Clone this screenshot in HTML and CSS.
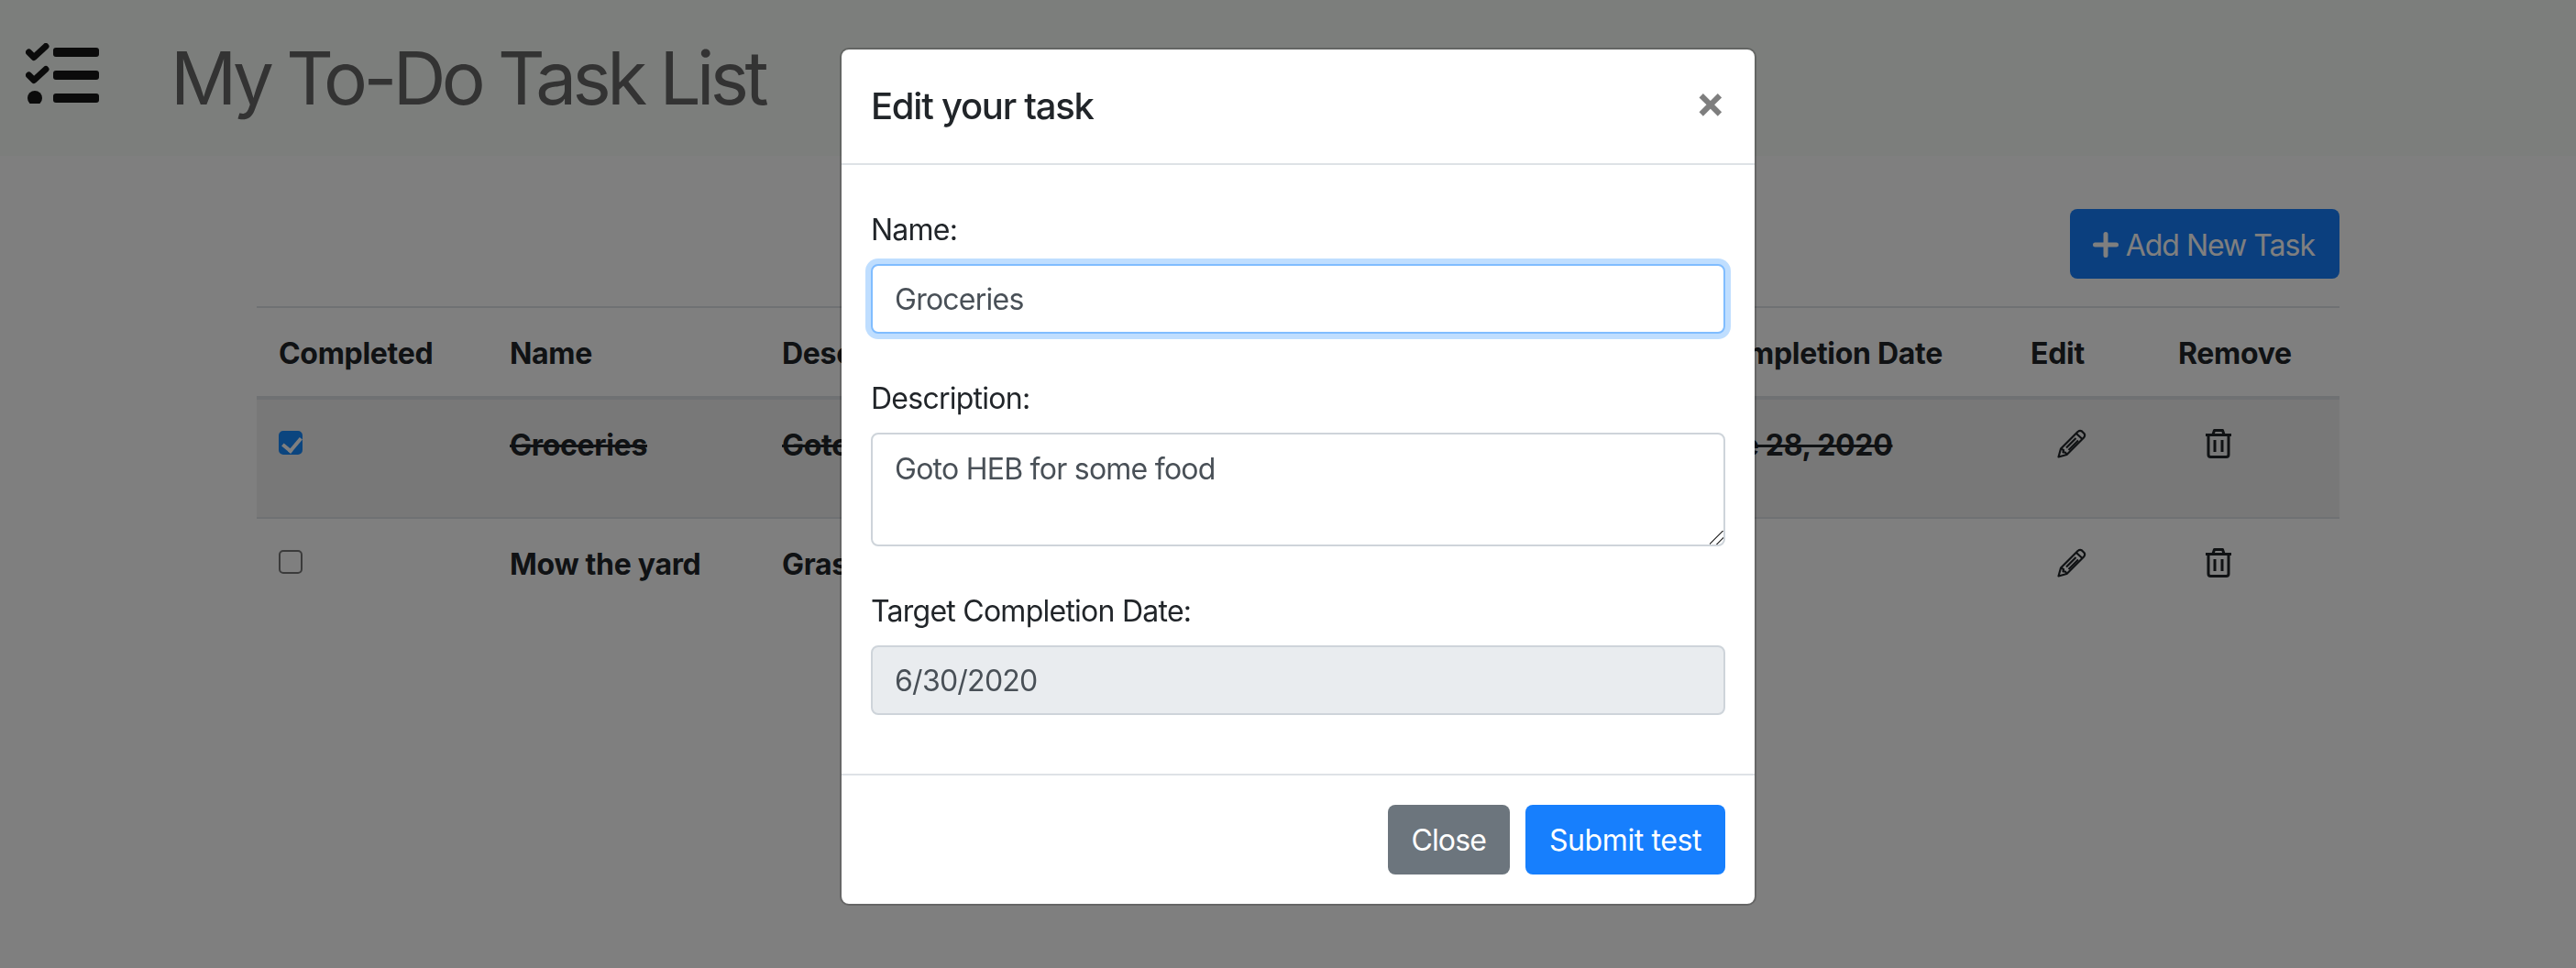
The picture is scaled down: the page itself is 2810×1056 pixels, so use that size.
FILE: index.html
```html
<!DOCTYPE html>
<html lang="en">
<head>
  <meta charset="UTF-8">
  <meta name="viewport" content="width=device-width, initial-scale=1.0">
  <title>My To-Do Task List</title>
  <link rel="stylesheet" href="styles.css">
</head>
<body>
  <header class="app-header">
    <svg class="logo" viewBox="0 0 84 66" width="84" height="66">
      <path class="logo-check" d="M3.5 10 L9 15.5 L22 3.5" />
      <path class="logo-check" d="M3.5 35 L9 40.5 L22 28.5" />
      <circle cx="10" cy="60" r="8" />
      <rect x="30" y="5" width="50" height="10" rx="3" />
      <rect x="30" y="30" width="50" height="10" rx="3" />
      <rect x="30" y="55" width="50" height="10" rx="3" />
    </svg>
    <h1>My To-Do Task List</h1>
  </header>

  <main class="content">
    <div class="toolbar">
      <button class="btn btn-primary btn-add">
        <svg class="plus" viewBox="0 0 28 28" width="28" height="28"><path d="M14 2.5 V25.5 M2.5 14 H25.5" /></svg>
        Add New Task
      </button>
    </div>
    <table class="tasks">
      <colgroup>
        <col class="col-done"><col class="col-name"><col class="col-desc"><col class="col-date"><col class="col-edit"><col class="col-remove">
      </colgroup>
      <thead>
        <tr>
          <th>Completed</th>
          <th>Name</th>
          <th>Description</th>
          <th>Target Completion Date</th>
          <th>Edit</th>
          <th>Remove</th>
        </tr>
      </thead>
      <tbody>
        <tr class="done">
          <td><input type="checkbox" class="check" checked></td>
          <td class="strong">Groceries</td>
          <td class="strong">Goto HEB for some food</td>
          <td class="strong">Mon, June 28, 2020</td>
          <td>
            <svg class="icon-pencil" viewBox="0 0 32 32" width="32" height="32">
              <path d="M1.5 30.5 L4 21.5 L22.5 3 Q25 1 27 2.5 L29.5 5 Q31 7 29 9.5 L10.5 28 Z" />
              <path d="M21 5 L27.5 11 M4 21.5 L7 23 L6.5 25.5 L9 25.5 L10.5 28 M10 20.5 L20.5 10 M12.5 23 L23 12.5" />
            </svg>
          </td>
          <td>
            <svg class="icon-trash" viewBox="0 0 28 32" width="28" height="32">
              <path d="M0 6.5 H28 M8 6 L9.5 1.5 H18.5 L20 6 M3 7 V28 Q3 30.5 5.5 30.5 H22.5 Q25 30.5 25 28 V7 M10 12 V25 M18 12 V25" />
            </svg>
          </td>
        </tr>
        <tr>
          <td><input type="checkbox" class="check"></td>
          <td class="strong">Mow the yard</td>
          <td class="strong">Grass needs cutting</td>
          <td class="strong">7/4/2020</td>
          <td>
            <svg class="icon-pencil" viewBox="0 0 32 32" width="32" height="32">
              <path d="M1.5 30.5 L4 21.5 L22.5 3 Q25 1 27 2.5 L29.5 5 Q31 7 29 9.5 L10.5 28 Z" />
              <path d="M21 5 L27.5 11 M4 21.5 L7 23 L6.5 25.5 L9 25.5 L10.5 28 M10 20.5 L20.5 10 M12.5 23 L23 12.5" />
            </svg>
          </td>
          <td>
            <svg class="icon-trash" viewBox="0 0 28 32" width="28" height="32">
              <path d="M0 6.5 H28 M8 6 L9.5 1.5 H18.5 L20 6 M3 7 V28 Q3 30.5 5.5 30.5 H22.5 Q25 30.5 25 28 V7 M10 12 V25 M18 12 V25" />
            </svg>
          </td>
        </tr>
      </tbody>
    </table>
  </main>

  <div class="backdrop"></div>

  <div class="modal">
    <div class="modal-header">
      <h5>Edit your task</h5>
      <button class="close">&times;</button>
    </div>
    <form class="modal-body">
      <div class="form-group">
        <label for="name">Name:</label>
        <input id="name" class="form-control focused" type="text" value="Groceries">
      </div>
      <div class="form-group">
        <label for="desc">Description:</label>
        <textarea id="desc" class="form-control" rows="2">Goto HEB for some food</textarea>
      </div>
      <div class="form-group">
        <label for="date">Target Completion Date:</label>
        <input id="date" class="form-control" type="text" value="6/30/2020" disabled>
      </div>
    </form>
    <div class="modal-footer">
      <button class="btn btn-secondary">Close</button>
      <button class="btn btn-primary btn-submit">Submit test</button>
    </div>
  </div>
</body>
</html>
```

FILE: styles.css
```css
* {
  box-sizing: border-box;
}

html,
body {
  height: 100%;
}

body {
  margin: 0;
  overflow: hidden;
  background: #fff;
  color: #212529;
  font-family: Inter, "Liberation Sans", sans-serif;
  font-size: 32px;
  line-height: 48px;
  letter-spacing: -0.75px;
}

.app-header {
  display: flex;
  align-items: center;
  height: 170px;
  padding: 0 0 10px 28px;
  background: #f8fcf8;
}

.app-header h1 {
  margin: 10px 0 0 74px;
  color: #666;
  font-size: 80px;
  font-weight: 400;
  line-height: 96px;
  letter-spacing: -4.6px;
}

.logo {
  fill: #161616;
}

.logo-check {
  fill: none;
  stroke: #161616;
  stroke-width: 7;
  stroke-linecap: round;
  stroke-linejoin: round;
}

.content {
  padding: 58px 258px 0 280px;
}

.toolbar {
  display: flex;
  justify-content: flex-end;
  margin-bottom: 30px;
}

.btn {
  height: 76px;
  padding: 2px 26px 0;
  border: 0;
  border-radius: 8px;
  color: #fff;
  font: inherit;
  letter-spacing: -0.9px;
}

.btn-primary {
  background: #177ffd;
}

.btn-secondary {
  background: #6c757d;
}

.btn-submit {
  letter-spacing: -0.4px;
}

.btn-add {
  display: flex;
  align-items: center;
  gap: 8px;
  padding: 4px 27px 0 25px;
  letter-spacing: -1px;
}

.plus {
  margin-top: -2px;
  fill: none;
  stroke: #fff;
  stroke-width: 5;
  stroke-linecap: round;
}

.tasks {
  width: 100%;
  border-collapse: separate;
  border-spacing: 0;
  table-layout: fixed;
}

.col-done { width: 252px; }
.col-name { width: 297px; }
.col-desc { width: 904px; }
.col-date { width: 458px; }
.col-edit { width: 161px; }
.col-remove { width: 200px; }

.tasks th {
  padding: 26px 24px 22px;
  border-top: 2px solid #dee2e6;
  border-bottom: 4px solid #dee2e6;
  font-weight: 700;
  letter-spacing: -0.3px;
  text-align: left;
  white-space: nowrap;
}

.tasks td {
  height: 130px;
  padding: 26px 24px 22px;
  border-bottom: 2px solid #dee2e6;
  vertical-align: top;
}

.tasks tbody tr:last-child td {
  border-bottom: 0;
}

.tasks td.strong {
  font-weight: 700;
  letter-spacing: -0.3px;
}

.done {
  background: #f0f0f0;
}

.done .strong {
  text-decoration: line-through;
}

.check {
  display: block;
  position: relative;
  width: 26px;
  height: 26px;
  margin: 8px 0 0;
  border: 2px solid #767676;
  border-radius: 5px;
  background: #fff;
  appearance: none;
}

.check:checked {
  border-color: #168aff;
  background: #168aff;
}

.check:checked::after {
  content: "";
  position: absolute;
  top: 1px;
  left: 6px;
  width: 9px;
  height: 16px;
  border: solid #fff;
  border-width: 0 4px 4px 0;
  transform: rotate(40deg);
}

.icon-pencil,
.icon-trash {
  display: block;
  margin-top: 6px;
  fill: none;
  stroke: #212529;
  stroke-linejoin: round;
}

.icon-pencil {
  margin-left: 29px;
  stroke-width: 2.2;
}

.icon-trash {
  margin-left: 30px;
  stroke-width: 3;
}

.backdrop {
  position: fixed;
  inset: 0;
  background: rgba(0, 0, 0, .5);
}

.modal {
  position: fixed;
  top: 52px;
  left: 916px;
  width: 1000px;
  border: 2px solid rgba(0, 0, 0, .2);
  border-radius: 10px;
  background: #fff;
  background-clip: padding-box;
}

.modal-header {
  display: flex;
  justify-content: space-between;
  align-items: center;
  height: 126px;
  padding: 0 32px;
  border-bottom: 2px solid #dee2e6;
}

.modal-header h5 {
  margin: 0;
  font-size: 40px;
  font-weight: 500;
  line-height: 60px;
  letter-spacing: -1.25px;
}

.close {
  margin-bottom: 10px;
  padding: 0;
  border: 0;
  background: none;
  color: #000;
  font: 700 48px/48px Inter, sans-serif;
  opacity: .5;
}

.modal-body {
  padding: 44px 32px 20px;
}

.form-group {
  margin-bottom: 44px;
}

.form-group label {
  display: block;
  margin-bottom: 13px;
  padding-top: 3px;
}

.form-control {
  display: block;
  width: 100%;
  height: 76px;
  padding: 12px 24px;
  border: 2px solid #ced4da;
  border-radius: 8px;
  background: #fff;
  color: #495057;
  font: inherit;
  letter-spacing: inherit;
}

textarea.form-control {
  height: 124px;
  padding-top: 14px;
}

textarea.form-control::-webkit-resizer {
  background: linear-gradient(135deg, transparent 46%, #555 46% 53%, transparent 53% 72%, #555 72% 79%, transparent 79%);
}

.form-control:disabled {
  background: #e9ecef;
  opacity: 1;
}

.focused {
  border-color: #80bdff;
  box-shadow: 0 0 0 6px #bfdeff;
}

.modal-footer {
  display: flex;
  justify-content: flex-end;
  gap: 17px;
  padding: 32px;
  border-top: 2px solid #dee2e6;
}
```
